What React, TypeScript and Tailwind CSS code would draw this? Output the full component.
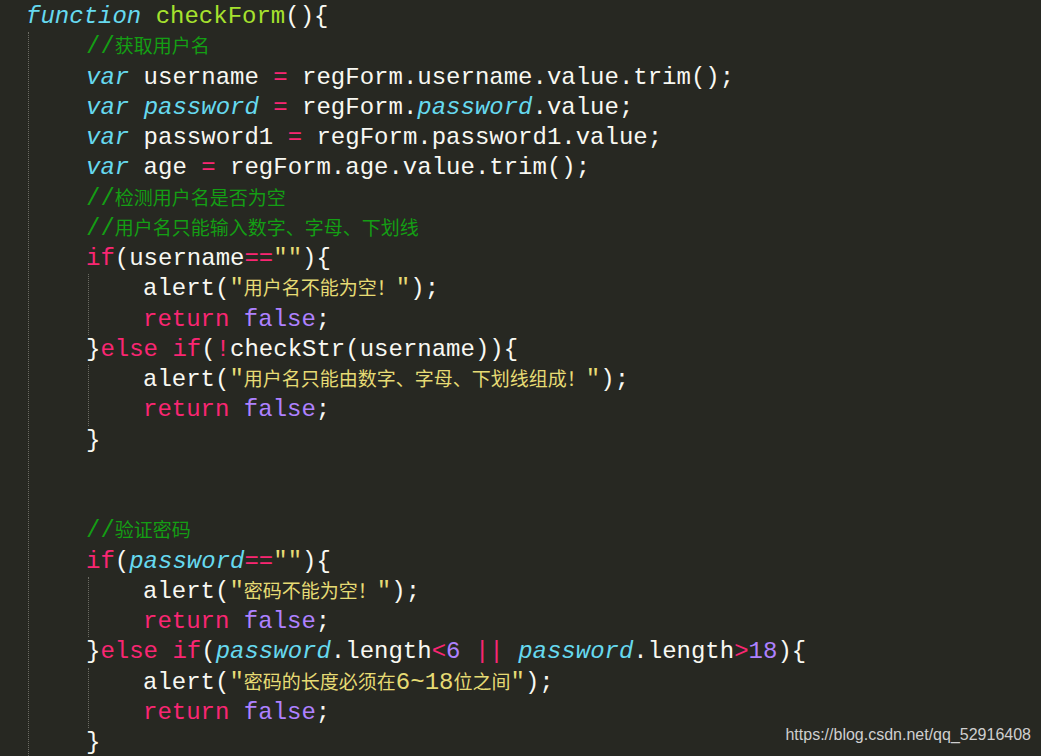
import React from "react"

type Tok = [string, string?]

// token colours (monokai-ish)
const W = "text-[#f8f8f2]"
const K = "text-[#66d9ef] italic"
const F = "text-[#a6e22e]"
const P = "text-[#f92672]"
const N = "text-[#ae81ff]"
const S = "text-[#e6db74]"
const C = "text-[#149e14]"

const cjk = /([\u3000-\u303f\u3400-\u9fff\uff00-\uffef]+)/

function Piece({ text, color }: { text: string; color?: string }) {
  const parts = text.split(cjk)
  return (
    <span className={color ?? W}>
      {parts.map((p, i) =>
        cjk.test(p) ? (
          <span
            key={i}
            className="text-[19px] not-italic font-['Noto_Sans_CJK_SC','Noto_Sans_CJK_JP',sans-serif]"
          >
            {p}
          </span>
        ) : (
          <span key={i}>{p}</span>
        )
      )}
    </span>
  )
}

function Line({ toks }: { toks: Tok[] }) {
  return (
    <div className="h-[30.25px] flex items-center whitespace-pre">
      <div>
        {toks.map(([t, c], i) => (
          <Piece key={i} text={t} color={c} />
        ))}
      </div>
    </div>
  )
}

function Block({ children }: { children: React.ReactNode }) {
  return <div className="ml-[2px] pl-[54px] border-l border-dotted border-[#6b6b63]">{children}</div>
}

const retFalse: Tok[] = [["return", P], [" "], ["false", N], [";"]]

export default function App() {
  return (
    <div className="relative h-[756px] w-full overflow-hidden bg-[#272822] pt-[2px] font-['Liberation_Mono',monospace] text-[24px] text-[#f8f8f2]">
      <div className="pl-[26px]">
        <Line toks={[["function", K], [" "], ["checkForm", F], ["(){"]]} />
      </div>

      <div className="ml-[28px] pl-[57px] border-l border-dotted border-[#6b6b63] h-[740px]">
        <Line toks={[["//获取用户名", C]]} />
        <Line toks={[["var", K], [" username "], ["=", P], [" regForm.username.value.trim();"]]} />
        <Line toks={[["var", K], [" "], ["password", K], [" "], ["=", P], [" regForm."], ["password", K], [".value;"]]} />
        <Line toks={[["var", K], [" password1 "], ["=", P], [" regForm.password1.value;"]]} />
        <Line toks={[["var", K], [" age "], ["=", P], [" regForm.age.value.trim();"]]} />
        <Line toks={[["//检测用户名是否为空", C]]} />
        <Line toks={[["//用户名只能输入数字、字母、下划线", C]]} />
        <Line toks={[["if", P], ["(username"], ["==", P], ['""', S], ["){"]]} />
        <Block>
          <Line toks={[["alert("], ['"用户名不能为空！"', S], [");"]]} />
          <Line toks={retFalse} />
        </Block>
        <Line toks={[["}"], ["else if", P], ["("], ["!", P], ["checkStr(username)){"]]} />
        <Block>
          <Line toks={[["alert("], ['"用户名只能由数字、字母、下划线组成！"', S], [");"]]} />
          <Line toks={retFalse} />
        </Block>
        <Line toks={[["}"]]} />
        <Line toks={[[""]]} />
        <Line toks={[[""]]} />
        <Line toks={[["//验证密码", C]]} />
        <Line toks={[["if", P], ["("], ["password", K], ["==", P], ['""', S], ["){"]]} />
        <Block>
          <Line toks={[["alert("], ['"密码不能为空！"', S], [");"]]} />
          <Line toks={retFalse} />
        </Block>
        <Line
          toks={[
            ["}"],
            ["else if", P],
            ["("],
            ["password", K],
            [".length"],
            ["<", P],
            ["6", N],
            [" "],
            ["||", P],
            [" "],
            ["password", K],
            [".length"],
            [">", P],
            ["18", N],
            ["){"],
          ]}
        />
        <Block>
          <Line toks={[["alert("], ['"密码的长度必须在6~18位之间"', S], [");"]]} />
          <Line toks={retFalse} />
        </Block>
        <Line toks={[["}"]]} />
      </div>

      <div className="absolute right-[10px] bottom-[9px] font-['Liberation_Sans',Arial,sans-serif] text-[16px] text-[#cfcfcf]">
        https://blog.csdn.net/qq_52916408
      </div>
    </div>
  )
}
